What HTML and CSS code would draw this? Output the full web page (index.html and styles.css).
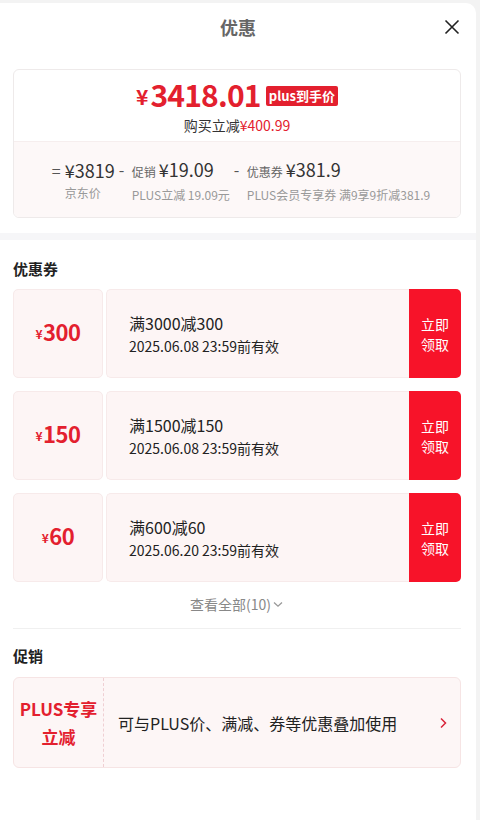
FILE: index.html
```html
<!DOCTYPE html>
<html lang="zh-CN">
<head>
    <meta charset="UTF-8">
    <meta name="viewport" content="width=device-width, initial-scale=1.0">
    <title>优惠</title>
    <link rel="stylesheet" href="styles.css">
</head>
<body>
    <div class="sheet">
        <div class="header">
            <span class="title">优惠</span>
            <button class="close" aria-label="关闭">
                <svg width="16" height="16" viewBox="0 0 16 16"><path d="M1.5 1.5L14.5 14.5M14.5 1.5L1.5 14.5" stroke="#222" stroke-width="1.6" fill="none"/></svg>
            </button>
        </div>

        <div class="summary">
            <div class="summary-top">
                <div class="final-price">
                    <span class="yen">¥</span><span class="num">3418.01</span>
                    <span class="tag">plus到手价</span>
                </div>
                <div class="saved">购买立减<span class="red">¥400.99</span></div>
            </div>
            <div class="summary-bottom">
                <div class="calc">
                    <span class="op">=</span>
                    <div class="calc-body">
                        <div class="calc-val">¥3819</div>
                        <div class="calc-label">京东价</div>
                    </div>
                </div>
                <div class="calc">
                    <span class="op">-</span>
                    <div class="calc-body">
                        <div class="calc-val"><small>促销</small>¥19.09</div>
                        <div class="calc-label">PLUS立减 19.09元</div>
                    </div>
                </div>
                <div class="calc">
                    <span class="op">-</span>
                    <div class="calc-body">
                        <div class="calc-val"><small>优惠券</small>¥381.9</div>
                        <div class="calc-label">PLUS会员专享券 满9享9折减381.9</div>
                    </div>
                </div>
            </div>
        </div>

        <div class="band"></div>

        <div class="section">
            <h3 class="section-title">优惠券</h3>
            <div class="coupon-list">
                <div class="coupon">
                    <div class="coupon-amount"><span class="yen">¥</span>300</div>
                    <div class="coupon-info">
                        <div class="coupon-rule">满3000减300</div>
                        <div class="coupon-date">2025.06.08 23:59前有效</div>
                    </div>
                    <button class="coupon-btn">立即<br>领取</button>
                </div>
                <div class="coupon">
                    <div class="coupon-amount"><span class="yen">¥</span>150</div>
                    <div class="coupon-info">
                        <div class="coupon-rule">满1500减150</div>
                        <div class="coupon-date">2025.06.08 23:59前有效</div>
                    </div>
                    <button class="coupon-btn">立即<br>领取</button>
                </div>
                <div class="coupon">
                    <div class="coupon-amount"><span class="yen">¥</span>60</div>
                    <div class="coupon-info">
                        <div class="coupon-rule">满600减60</div>
                        <div class="coupon-date">2025.06.20 23:59前有效</div>
                    </div>
                    <button class="coupon-btn">立即<br>领取</button>
                </div>
            </div>
            <div class="more">查看全部(10)
                <svg width="12" height="12" viewBox="0 0 12 12"><path d="M2 4.5L6 8.2L10 4.5" stroke="#999" stroke-width="1.3" fill="none"/></svg>
            </div>
        </div>

        <div class="section promo-section">
            <h3 class="section-title">促销</h3>
            <div class="promo">
                <div class="promo-name">PLUS专享<br>立减</div>
                <div class="promo-desc">可与PLUS价、满减、券等优惠叠加使用</div>
                <svg class="promo-arrow" width="10" height="14" viewBox="0 0 10 14"><path d="M3 2.5L7.5 7L3 11.5" stroke="#d9243a" stroke-width="1.5" fill="none"/></svg>
            </div>
        </div>
    </div>
</body>
</html>
```

FILE: styles.css
```css
body {
    margin: 0;
    background-color: #f3f3f3;
    font-family: "Noto Sans CJK SC", "Noto Sans", sans-serif;
    color: #222;
}
.sheet {
    margin-top: 3px;
    width: 476px;
    min-height: 817px;
    background: #fff;
    border-radius: 0 10px 0 0;
}
.header {
    position: relative;
    height: 48px;
    line-height: 48px;
    text-align: center;
}
.title {
    font-size: 18px;
    font-weight: bold;
    color: #666;
}
.close {
    position: absolute;
    right: 16px;
    top: 16px;
    width: 16px;
    height: 16px;
    padding: 0;
    border: none;
    background: none;
    display: flex;
}
.summary {
    margin: 18px 15px 0 13px;
    border: 1px solid #eeeaea;
    border-radius: 6px;
    overflow: hidden;
}
.summary-top {
    height: 71px;
    display: flex;
    flex-direction: column;
    align-items: center;
    padding-top: 3px;
    box-sizing: border-box;
}
.final-price {
    display: flex;
    align-items: center;
    color: #e3202e;
    height: 42px;
    font-weight: bold;
}
.final-price .yen {
    font-size: 21px;
    margin-right: 2px;
    margin-top: 4px;
}
.final-price .num {
    font-size: 30px;
    letter-spacing: -0.8px;
}
.tag {
    margin-left: 5px;
    margin-top: 3px;
    background: #e3202e;
    color: #fff;
    font-size: 13px;
    line-height: 20px;
    padding: 0 3px;
    border-radius: 2px;
}
.saved {
    font-size: 14px;
    line-height: 20px;
    color: #333;
}
.red {
    color: #e3202e;
}
.summary-bottom {
    height: 76px;
    background: #fdf8f8;
    border-top: 1px solid #f6eeee;
    display: flex;
    justify-content: center;
    align-items: center;
    gap: 4px;
    padding-top: 2px;
    padding-left: 8px;
    box-sizing: border-box;
}
.calc {
    display: flex;
}
.op {
    font-size: 16px;
    line-height: 24px;
    color: #555;
    width: 10px;
    margin-right: 3px;
}
.calc-val {
    font-size: 18px;
    line-height: 24px;
    color: #333;
}
.calc-val small {
    font-size: 12px;
    color: #666;
    margin-right: 3px;
}
.calc-label {
    font-size: 12px;
    line-height: 20px;
    color: #999;
    margin-top: 1px;
}
.band {
    margin-top: 15px;
    height: 7px;
    background: #f6f6f8;
}
.section {
    padding: 0 15px 0 13px;
}
.section-title {
    margin: 0;
    padding-top: 18px;
    font-size: 15px;
    line-height: 22px;
    font-weight: bold;
    color: #222;
}
.coupon-list {
    margin-top: 9px;
    display: flex;
    flex-direction: column;
    gap: 13px;
}
.coupon {
    display: flex;
    height: 89px;
}
.coupon-amount {
    width: 90px;
    display: flex;
    align-items: center;
    justify-content: center;
    padding-bottom: 5px;
    background: #fdf5f5;
    border: 1px solid #f7eaea;
    border-radius: 5px;
    box-sizing: border-box;
    color: #e3202e;
    font-size: 22px;
    font-weight: bold;
    letter-spacing: -0.5px;
}
.coupon-amount .yen {
    font-size: 12px;
    margin-top: 4px;
    margin-right: 1px;
}
.coupon-info {
    flex: 1;
    margin-left: 3px;
    background: #fdf5f5;
    border: 1px solid #f7eaea;
    border-right: none;
    border-radius: 5px 0 0 5px;
    display: flex;
    flex-direction: column;
    justify-content: center;
    padding-left: 22px;
}
.coupon-rule {
    font-size: 16px;
    line-height: 24px;
    color: #222;
}
.coupon-date {
    font-size: 14px;
    line-height: 22px;
    color: #222;
}
.coupon-btn {
    width: 52px;
    border: none;
    background: #f71329;
    color: #fff;
    font-family: inherit;
    font-size: 14px;
    line-height: 20px;
    border-radius: 0 5px 5px 0;
    padding: 0;
}
.more {
    margin-top: 12px;
    display: flex;
    justify-content: center;
    align-items: center;
    font-size: 14px;
    line-height: 20px;
    color: #888;
    gap: 1px;
    padding-bottom: 14px;
    border-bottom: 1px solid #f0f0f0;
}
.promo-section .section-title {
    padding-top: 16px;
}
.promo {
    margin-top: 10px;
    height: 91px;
    display: flex;
    align-items: center;
    background: #fdf6f6;
    border: 1px solid #f6e4e4;
    border-radius: 6px;
    box-sizing: border-box;
}
.promo-name {
    width: 89px;
    height: 100%;
    display: flex;
    align-items: center;
    justify-content: center;
    text-align: center;
    border-right: 1px dashed #efcfd3;
    color: #e3202e;
    font-size: 17px;
    line-height: 28px;
    font-weight: bold;
}
.promo-desc {
    flex: 1;
    padding-left: 14px;
    font-size: 16px;
    color: #222;
}
.promo-arrow {
    margin-right: 12px;
}
```
